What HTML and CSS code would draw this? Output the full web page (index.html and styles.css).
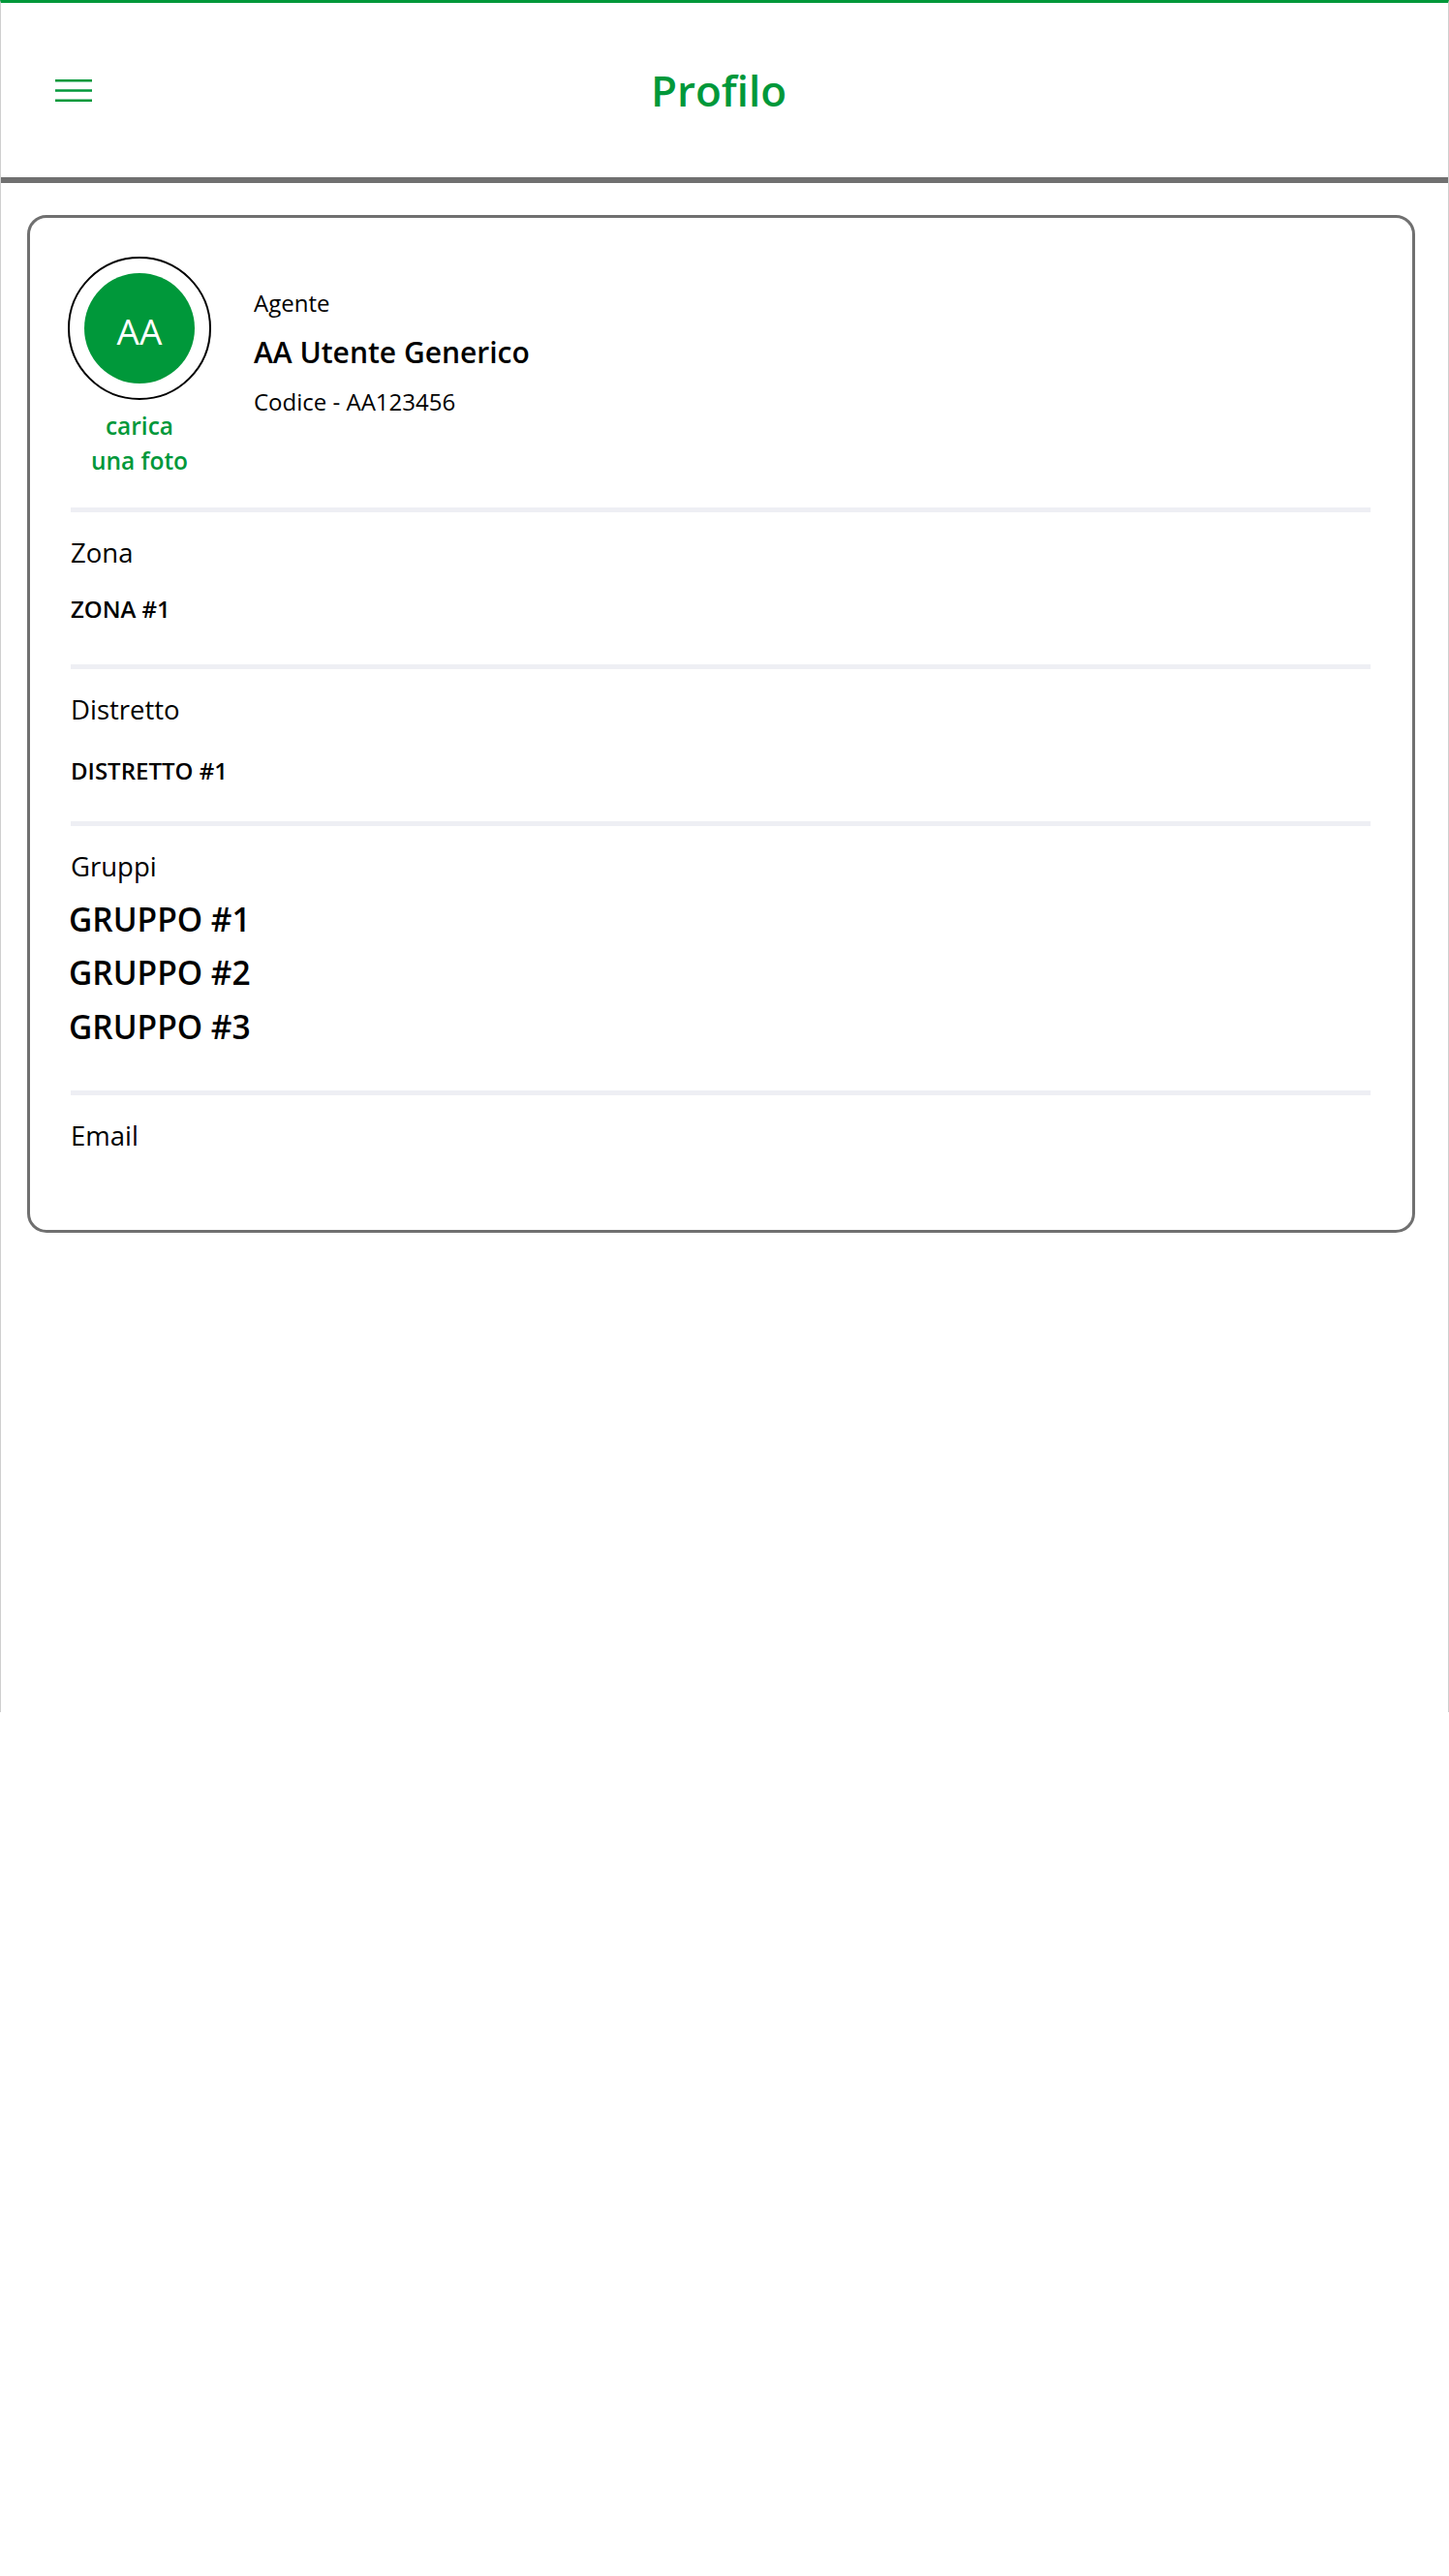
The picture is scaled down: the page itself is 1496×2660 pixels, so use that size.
FILE: index.html
```html
<!DOCTYPE html>
<html lang="it">
<head>
<meta charset="utf-8">
<title>Profilo</title>
<link rel="stylesheet" href="styles.css">
</head>
<body>
<div class="app">
  <header class="topbar">
    <button class="menu-btn" aria-label="Menu">
      <svg width="38" height="26" viewBox="0 0 38 26">
        <line x1="0" y1="3.2" x2="38" y2="3.2" stroke="#00983a" stroke-width="2.5"/>
        <line x1="0" y1="13.5" x2="38" y2="13.5" stroke="#00983a" stroke-width="2.5"/>
        <line x1="0" y1="23.8" x2="38" y2="23.8" stroke="#00983a" stroke-width="2.5"/>
      </svg>
    </button>
    <h1 class="title">Profilo</h1>
  </header>

  <main class="content">
    <section class="card">
      <div class="profile">
        <div class="avatar-col">
          <div class="avatar-ring">
            <div class="avatar">AA</div>
          </div>
          <div class="upload">carica<br>una foto</div>
        </div>
        <div class="info">
          <div class="role">Agente</div>
          <div class="name">AA Utente Generico</div>
          <div class="code">Codice - AA123456</div>
        </div>
      </div>

      <div class="field field-zona">
        <div class="label">Zona</div>
        <div class="value">ZONA #1</div>
      </div>

      <div class="field field-distretto">
        <div class="label">Distretto</div>
        <div class="value">DISTRETTO #1</div>
      </div>

      <div class="field field-gruppi">
        <div class="label">Gruppi</div>
        <ul class="groups">
          <li>GRUPPO #1</li>
          <li>GRUPPO #2</li>
          <li>GRUPPO #3</li>
        </ul>
      </div>

      <div class="field field-email">
        <div class="label">Email</div>
      </div>
    </section>
  </main>
</div>
</body>
</html>
```

FILE: styles.css
```css
* { box-sizing: border-box; }

html, body {
  margin: 0;
  padding: 0;
  background: #ffffff;
}

body {
  font-family: "Open Sans", "Noto Sans", "Liberation Sans", sans-serif;
  color: #000;
}

.app {
  width: 1496px;
  height: 1768px;
  border-top: 3px solid #00983a;
  border-left: 1px solid #cfcfcf;
  border-right: 1px solid #cfcfcf;
  background: #fff;
}

.topbar {
  height: 186px;
  border-bottom: 6px solid #707070;
  display: flex;
  align-items: center;
  padding: 0 56px;
}

.menu-btn {
  border: 0;
  background: none;
  padding: 0;
  margin: 0;
  width: 38px;
  height: 26px;
  display: block;
  cursor: pointer;
}

.menu-btn svg { display: block; }

.title {
  flex: 1;
  margin: 0 50px 0 0;
  text-align: center;
  font-size: 44px;
  line-height: 1;
  font-weight: 600;
  color: #00983a;
}

.content {
  padding: 33px 34px 0 27px;
}

.card {
  border: 3px solid #707070;
  border-radius: 20px;
  padding: 0 43px 0 42px;
}

.profile {
  display: flex;
  align-items: flex-start;
  padding: 40px 0 29px;
  margin-left: -3px;
}

.avatar-col {
  width: 148px;
  display: flex;
  flex-direction: column;
  align-items: center;
}

.avatar-ring {
  width: 148px;
  height: 148px;
  border: 2px solid #000;
  border-radius: 50%;
  display: flex;
  align-items: center;
  justify-content: center;
}

.avatar {
  width: 114px;
  height: 114px;
  border-radius: 50%;
  background: #00983a;
  color: #fff;
  font-size: 37px;
  font-weight: 500;
  line-height: 1;
  display: flex;
  align-items: center;
  justify-content: center;
  padding-top: 5px;
}

.upload {
  margin-top: 9px;
  font-size: 24.5px;
  line-height: 36.4px;
  font-weight: 600;
  color: #00983a;
  text-align: center;
}

.info {
  margin-top: 31px;
  margin-left: 44px;
  display: flex;
  flex-direction: column;
}

.role {
  font-size: 24px;
  line-height: 34px;
}

.name {
  margin-top: 14px;
  font-size: 30px;
  line-height: 40px;
  font-weight: 600;
}

.code {
  margin-top: 14px;
  font-size: 24px;
  line-height: 34px;
}

.field {
  border-top: 5px solid #eeeff4;
  padding-top: 23px;
}

.label {
  font-size: 27.5px;
  line-height: 38px;
}

.value {
  font-size: 24px;
  line-height: 34px;
  font-weight: 600;
}

.field-zona .value { margin-top: 22px; }
.field-zona { padding-bottom: 40px; }

.field-distretto .value { margin-top: 27px; }
.field-distretto { padding-bottom: 35px; }

.groups {
  list-style: none;
  margin: 8px 0 0 -2px;
  padding: 0;
}

.groups li {
  font-size: 33.5px;
  line-height: 55.5px;
  font-weight: 600;
}

.field-gruppi { padding-bottom: 38px; }

.field-email { padding-bottom: 77.5px; }
```
